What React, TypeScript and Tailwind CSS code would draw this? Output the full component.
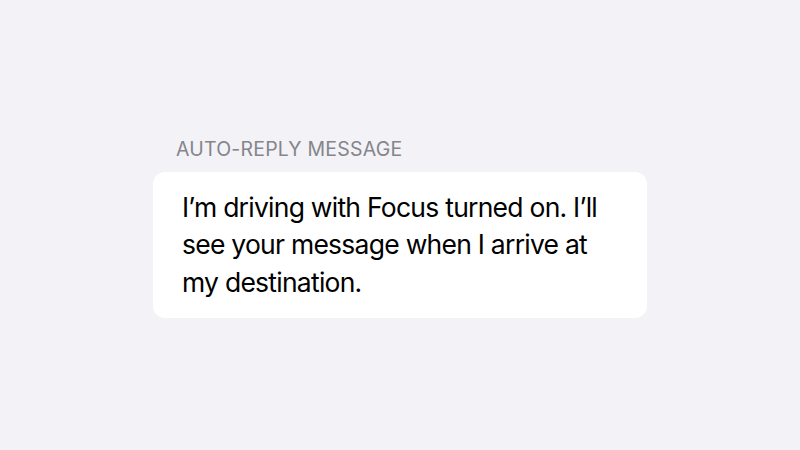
export default function App() {
  return (
    <div
      className="w-[800px] h-[450px] bg-[#f2f2f7] flex flex-col pt-[138px] pl-[153px]"
      style={{ fontFamily: "Inter, 'Noto Sans', sans-serif" }}
    >
      <p className="pl-[23px] text-[19.5px] leading-[22px] text-[#85858a] tracking-[0.2px]">
        AUTO-REPLY MESSAGE
      </p>
      <div className="mt-[12px] w-[494px] h-[146px] bg-white rounded-[12px] pl-[29px] pr-[20px] pt-[17px]">
        <p className="text-[26.5px] leading-[37.3px] text-black tracking-[-0.75px]">
          I’m driving with Focus turned on. I’ll see your message when I arrive at my destination.
        </p>
      </div>
    </div>
  );
}
